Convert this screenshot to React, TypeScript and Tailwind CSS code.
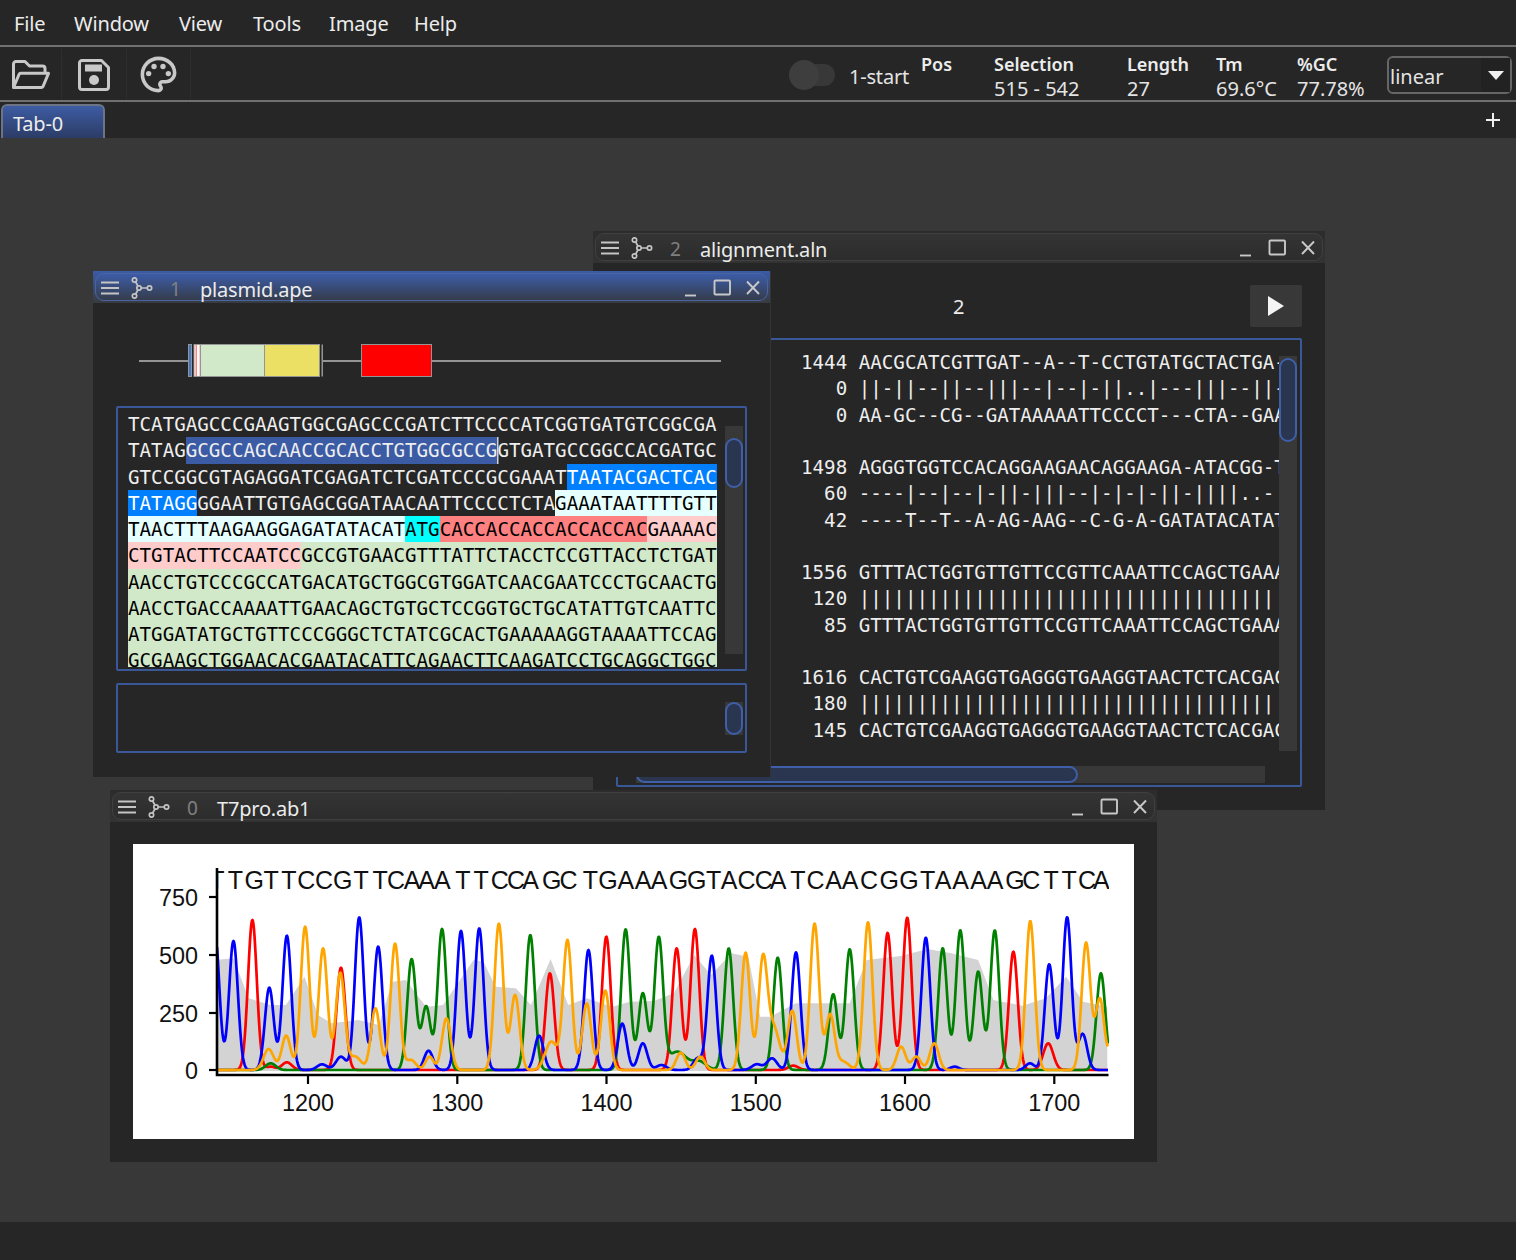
import React from "react";
import { MdOutlinePalette } from "react-icons/md";

const X7 = (z: number) => 105 + z / 2.958;
const X8 = (z: number) => 630 + z / 2.958;
const BASE = 1070;
type Peak = [number, number, number?];
const P = (X: (z: number) => number, z: number, zy: number, s?: number): Peak => [X(z), (855 - zy) / 3, s];

const blue: Peak[] = [
  P(X7, 325, 441), P(X7, 380, 468), P(X7, 486, 608), P(X7, 538, 452), P(X7, 642, 838, 5), P(X7, 698, 815, 5), P(X7, 752, 397), P(X7, 808, 485),
  P(X7, 957, 797), P(X7, 1053, 438), P(X7, 1107, 430), P(X7, 1284, 752), P(X7, 1430, 495), P(X7, 1530, 716),
  P(X8, 38, 775), P(X8, 93, 840, 5), P(X8, 200, 820), P(X8, 242, 512), P(X8, 375, 838, 5), P(X8, 420, 820, 5), P(X8, 491, 502), P(X8, 875, 458), P(X8, 960, 845), P(X8, 1183, 835), P(X8, 1240, 538), P(X8, 1293, 397), P(X8, 1339, 747),
];
const red: Peak[] = [
  P(X7, 436, 405), P(X7, 538, 832, 5), P(X7, 490, 845), P(X7, 698, 548), P(X7, 1316, 565), P(X7, 1483, 455),
  P(X8, 138, 490), P(X8, 192, 432), P(X8, 483, 842, 5), P(X8, 762, 444), P(X8, 820, 398), P(X8, 1134, 500), P(X8, 1237, 775, 5),
];
const green: Peak[] = [
  P(X7, 490, 835, 5), P(X7, 907, 523), P(X7, 950, 665), P(X7, 997, 432), P(X7, 1258, 450), P(X7, 1540, 433),
  P(X8, 38, 625), P(X8, 85, 462), P(X8, 140, 800, 9), P(X8, 205, 830, 7), P(X8, 292, 490), P(X8, 437, 518), P(X8, 601, 628), P(X8, 650, 493), P(X8, 925, 490), P(X8, 977, 436), P(X8, 1030, 560), P(X8, 1079, 436), P(X8, 1393, 565),
];
const orange: Peak[] = [
  P(X7, 484, 792, 5), P(X7, 536, 752), P(X7, 592, 425), P(X7, 645, 490), P(X7, 696, 565), P(X7, 740, 815, 6), P(X7, 800, 670), P(X7, 858, 476), P(X7, 905, 825, 5), P(X7, 960, 815, 4), P(X7, 1010, 700), P(X7, 1165, 416), P(X7, 1213, 630), P(X7, 1320, 770, 6), P(X7, 1368, 467), P(X7, 1425, 655), P(X7, 1480, 617),
  P(X8, 150, 803), P(X8, 208, 815), P(X8, 342, 503), P(X8, 393, 533), P(X8, 425, 730, 6), P(X8, 480, 678), P(X8, 546, 416), P(X8, 592, 690), P(X8, 630, 830, 6), P(X8, 704, 412), P(X8, 802, 785), P(X8, 847, 815), P(X8, 900, 775), P(X8, 1184, 408), P(X8, 1349, 474), P(X8, 1390, 642), P(X8, 1440, 620),
];

function trace(peaks: Peak[]) {
  const pts: string[] = [];
  for (let x = 217; x <= 1108; x += 0.5) {
    let h = 0;
    for (const [c, a, s] of peaks) {
      const sg = s ?? 4.4;
      h += a * Math.exp(-((x - c) ** 2) / (2 * sg * sg));
    }
    pts.push(`${(x - 133).toFixed(1)},${(BASE - h - 844).toFixed(1)}`);
  }
  return pts.join(" ");
}

const gray7 = [[330, 525], [380, 520], [395, 560], [425, 640], [490, 660], [535, 660], [590, 575], [630, 690], [670, 715], [750, 705], [810, 720], [850, 590], [890, 585], [930, 640], [950, 665], [1000, 660], [1090, 525], [1120, 530], [1155, 605], [1215, 610], [1260, 660], [1318, 522], [1370, 660], [1425, 640], [1500, 665]];
const gray8 = [[0, 650], [70, 648], [130, 625], [190, 510], [240, 570], [300, 505], [350, 515], [385, 695], [415, 695], [490, 655], [650, 655], [700, 525], [800, 513], [880, 492], [950, 505], [1030, 525], [1075, 645], [1160, 662], [1230, 640], [1290, 575], [1340, 650], [1412, 665]];
const grayPts = [
  `84,${BASE - 844 + 1}`,
  ...gray7.map(([z, y]) => `${(X7(z) - 133).toFixed(1)},${(785 + y / 3 - 844).toFixed(1)}`),
  ...gray8.map(([z, y]) => `${(X8(z) - 133).toFixed(1)},${(785 + y / 3 - 844).toFixed(1)}`),
  `${(X8(1412) - 133).toFixed(1)},${BASE - 844 + 1}`,
].join(" ");

const letters: [string, number][] = [
  ...("T T G T T C C G T T C A A A T T C C A G C T G A".split(" ").map((b, i) => [b, X7([325, 380, 436, 486, 538, 592, 645, 698, 752, 808, 858, 907, 950, 997, 1053, 1107, 1165, 1213, 1258, 1316, 1368, 1430, 1483, 1540][i])] as [string, number])),
  ...("A A G G T A C C A T C A A C G G T A A A A G C T T C A".split(" ").map((b, i) => [b, X8([38, 85, 138, 192, 242, 292, 342, 393, 437, 491, 546, 601, 650, 704, 762, 820, 875, 925, 977, 1030, 1079, 1134, 1184, 1240, 1293, 1349, 1393][i])] as [string, number])),
];

function Chromatogram() {
  const xt = [[1200, 308], [1300, 457.3], [1400, 606.5], [1500, 755.8], [1600, 905], [1700, 1054.3]];
  const yt = [[750, 897], [500, 955], [250, 1013], [0, 1070]];
  return (
    <svg width="1001" height="295" className="block" fontFamily="'Liberation Sans', Arial, sans-serif">
      <defs>
        <clipPath id="plot"><rect x="85" y="20" width="891" height="212" /></clipPath>
      </defs>
      <polygon points={grayPts} fill="#d3d3d3" clipPath="url(#plot)" />
      <g fill="none" strokeWidth="2.7" clipPath="url(#plot)" strokeLinejoin="round">
        <polyline points={trace(red)} stroke="#ff0000" />
        <polyline points={trace(green)} stroke="#008000" />
        <polyline points={trace(blue)} stroke="#0000ff" />
        <polyline points={trace(orange)} stroke="#ffa500" />
      </g>
      <g clipPath="url(#plot)" fontSize="25" fill="#111">
        {letters.map(([b, x], i) => <text key={i} x={x - 133 - (b === "T" ? 5.7 : 8)} y={44.5}>{b}</text>)}
      </g>
      <path d="M84 24V231H975.5" fill="none" stroke="#000" strokeWidth="2.6" />
      {yt.map(([v, y]) => (
        <g key={v}>
          <line x1="76" x2="84" y1={y - 844} y2={y - 844} stroke="#000" strokeWidth="2.2" />
          <text x="65" y={y - 844 + 8.5} fontSize="23.4" textAnchor="end" fill="#111">{v}</text>
        </g>
      ))}
      {xt.map(([v, x]) => (
        <g key={v}>
          <line x1={x - 133} x2={x - 133} y1="231" y2="240" stroke="#000" strokeWidth="2.2" />
          <text x={x - 133} y="266.5" fontSize="23.4" textAnchor="middle" fill="#111">{v}</text>
        </g>
      ))}
    </svg>
  );
}

function TreeIcon() {
  return (
    <svg width="22" height="22" viewBox="0 0 22 22" fill="none" stroke="#c4c4c4" strokeWidth="1.7" className="shrink-0">
      <circle cx="3.5" cy="3" r="2.2" /><circle cx="3.5" cy="19" r="2.2" /><circle cx="8" cy="11" r="2.2" /><circle cx="18.5" cy="11" r="2.2" />
      <path d="M4.6 5 L7 9 M4.6 17 L7 13 M10.2 11 H16.3" />
    </svg>
  );
}

function MenuIcon() {
  return (
    <svg width="18" height="14" viewBox="0 0 18 14" stroke="#c4c4c4" strokeWidth="2" className="shrink-0">
      <path d="M0 1.5H18M0 7H18M0 12.5H18" />
    </svg>
  );
}

function TitleBar({ active, index, title }: { active?: boolean; index: string; title: string }) {
  return (
    <div className={active ? "h-[32px] shrink-0 bg-gradient-to-b from-[#3a5ba8] to-[#383a40] px-[2px] pt-[2px] pb-[2px]" : "h-[32px] shrink-0 bg-gradient-to-b from-[#2c2c2c] to-[#333333] px-[2px] pt-[2px] pb-[2px]"}>
      <div className={active ? "flex h-full items-center rounded-[9px] border border-[#4a64a0] bg-gradient-to-b from-[#3c5ca8] to-[#353c4c] pl-[5px] pr-[7px] pt-[2px]" : "flex h-full items-center rounded-[9px] border border-[#404040] bg-gradient-to-b from-[#343434] to-[#2c2c2c] pl-[5px] pr-[7px] pt-[2px]"}>
        <MenuIcon />
        <div className="ml-[12px]"><TreeIcon /></div>
        <span className="ml-[17px] w-[30px] pt-[3px] text-[19px] leading-none text-[#808080]">{index}</span>
        <span className="pt-[3px] text-[20px] leading-none tracking-[-0.2px] text-[#ececec]">{title}</span>
        <svg width="75" height="18" viewBox="0 0 75 18" fill="none" stroke="#c8c8c8" strokeWidth="1.9" className="ml-auto shrink-0">
          <path d="M0 16.5H11" />
          <rect x="29.5" y="1.5" width="15.5" height="14" rx="1" />
          <path d="M62 2.5 L74 15 M74 2.5 L62 15" />
        </svg>
      </div>
    </div>
  );
}

function Win({ className, active, index, title, children }: { className: string; active?: boolean; index: string; title: string; children: React.ReactNode }) {
  return (
    <div className={"absolute flex flex-col bg-[#262626] " + className}>
      <TitleBar active={active} index={index} title={title} />
      {children}
    </div>
  );
}

const MONO = "font-['DejaVu_Sans_Mono',monospace] text-[19.18px] whitespace-pre";

function Seq({ children }: { children: React.ReactNode }) {
  return <div className="flex h-[26.25px] items-stretch leading-[28px]">{children}</div>;
}
const W = ({ t }: { t: string }) => <span className="text-[#eeeeee]">{t}</span>;
const Sp = ({ t, c }: { t: string; c: string }) => <span className={c}>{t}</span>;
const GREEN = "bg-[#d1e8c9] text-black";

function SeqView() {
  return (
    <div className={MONO + " h-[256px] w-[590px] overflow-hidden"}>
      <Seq><W t="TCATGAGCCCGAAGTGGCGAGCCCGATCTTCCCCATCGGTGATGTCGGCGA" /></Seq>
      <Seq><W t="TATAG" /><Sp t="GCGCCAGCAACCGCACCTGTGGCGCCG" c="bg-[#3b5ba5] text-[#eeeeee] shadow-[1.5px_0_0_#d0d0d0]" /><W t="GTGATGCCGGCCACGATGC" /></Seq>
      <Seq><W t="GTCCGGCGTAGAGGATCGAGATCTCGATCCCGCGAAAT" /><Sp t="TAATACGACTCAC" c="bg-[#0080ff] text-white" /></Seq>
      <Seq><Sp t="TATAGG" c="bg-[#0080ff] text-white" /><W t="GGAATTGTGAGCGGATAACAATTCCCCTCTA" /><Sp t="GAAATAATTTTGTT" c="bg-[#e6ffff] text-black" /></Seq>
      <Seq><Sp t="TAACTTTAAGAAGGAGATATACAT" c="bg-[#e6ffff] text-black" /><Sp t="ATG" c="bg-[#00ffff] text-black" /><Sp t="CACCACCACCACCACCAC" c="bg-[#ff8080] text-black" /><Sp t="GAAAAC" c="bg-[#ffcccc] text-black" /></Seq>
      <Seq><Sp t="CTGTACTTCCAATCC" c="bg-[#ffcccc] text-black" /><Sp t="GCCGTGAACGTTTATTCTACCTCCGTTACCTCTGAT" c={GREEN} /></Seq>
      <Seq><Sp t="AACCTGTCCCGCCATGACATGCTGGCGTGGATCAACGAATCCCTGCAACTG" c={GREEN} /></Seq>
      <Seq><Sp t="AACCTGACCAAAATTGAACAGCTGTGCTCCGGTGCTGCATATTGTCAATTC" c={GREEN} /></Seq>
      <Seq><Sp t="ATGGATATGCTGTTCCCGGGCTCTATCGCACTGAAAAAGGTAAAATTCCAG" c={GREEN} /></Seq>
      <Seq><Sp t="GCGAAGCTGGAACACGAATACATTCAGAACTTCAAGATCCTGCAGGCTGGC" c={GREEN} /></Seq>
    </div>
  );
}

const ALN = `1444 AACGCATCGTTGAT--A--T-CCTGTATGCTACTGA-TT
   0 ||-||--||--|||--|--|-||..|---|||--||-||
   0 AA-GC--CG--GATAAAAATTCCCCT---CTA--GAA-AA

1498 AGGGTGGTCCACAGGAAGAACAGGAAGA-ATACGG-TTAC
  60 ----|--|--|-||-|||--|-|-|-||-||||..-
  42 ----T--T--A-AG-AAG--C-G-A-GATATACATATGCA

1556 GTTTACTGGTGTTGTTCCGTTCAAATTCCAGCTGAAAGGT
 120 ||||||||||||||||||||||||||||||||||||
  85 GTTTACTGGTGTTGTTCCGTTCAAATTCCAGCTGAAAGGT

1616 CACTGTCGAAGGTGAGGGTGAAGGTAACTCTCACGACGGT
 180 ||||||||||||||||||||||||||||||||||||
 145 CACTGTCGAAGGTGAGGGTGAAGGTAACTCTCACGACGGT`;

function PlasmidMap() {
  return (
    <svg width="582" height="33" className="ml-[46px] block" fill="none">
      <path d="M0 17H49M184 17H222M293 17H582" stroke="#949494" strokeWidth="2" />
      <rect x="49.5" y="0.5" width="3" height="32" fill="#3b78c8" stroke="#949494" />
      <rect x="55" y="0.5" width="6" height="32" fill="#ffffff" stroke="#949494" />
      <rect x="56.5" y="1" width="1.5" height="31" fill="#ff8080" />
      <rect x="60" y="1" width="1.5" height="31" fill="#ffcccc" />
      <rect x="61.5" y="0.5" width="64" height="32" fill="#d1e8c9" stroke="#949494" />
      <rect x="125.5" y="0.5" width="55" height="32" fill="#ebdf64" stroke="#949494" />
      <rect x="182.5" y="0.5" width="1.5" height="32" fill="#949494" />
      <rect x="222.5" y="0.5" width="70" height="32" fill="#ff0000" stroke="#949494" />
    </svg>
  );
}

function Thumb({ className }: { className: string }) {
  return <div className={"rounded-full border-2 border-[#3f5fa8] bg-[#2a3550] " + className} />;
}

function Stat({ label, value, className }: { label: string; value: string; className: string }) {
  return (
    <div className={"flex h-[50px] shrink-0 flex-col pt-[2px] " + className}>
      <span className="text-[18px] leading-[24px] font-semibold text-[#ececec]">{label}</span>
      <span className="text-[20px] leading-[25px] text-[#e4e4e4]">{value}</span>
    </div>
  );
}

export default function App() {
  return (
    <div className="flex h-[1260px] w-[1516px] flex-col overflow-hidden bg-[#383838] font-['Noto_Sans','Open_Sans',sans-serif] text-[#ececec]">
      {/* menu */}
      <div className="flex h-[45px] shrink-0 items-center bg-[#262626] pl-[14px] pt-[2px] text-[20px] tracking-[-0.15px]">
        <span className="w-[60px]">File</span>
        <span className="w-[105px]">Window</span>
        <span className="w-[74px]">View</span>
        <span className="w-[76px]">Tools</span>
        <span className="w-[85px]">Image</span>
        <span>Help</span>
      </div>
      <div className="h-[2px] shrink-0 bg-[#707070]" />
      {/* toolbar */}
      <div className="flex h-[53px] shrink-0 items-center bg-[#262626] pr-[4px] pt-[2px]">
        <div className="flex h-full w-[62px] items-center justify-center border-r border-[#2e2e2e]">
          <svg width="40" height="32" viewBox="0 0 40 32" fill="none" stroke="#c8c8c8" strokeWidth="3" strokeLinejoin="round">
            <path d="M2.5 28V5a2.5 2.5 0 0 1 2.5-2.5h9l4.5 4.5h13a2.5 2.5 0 0 1 2.5 2.5v4" />
            <path d="M2.5 28.5l5.5-13a2 2 0 0 1 2-1.2h27.5l-5.5 13.2a2 2 0 0 1-2 1H2.5z" />
          </svg>
        </div>
        <div className="flex h-full w-[65px] items-center justify-center border-r border-[#2e2e2e]">
          <svg width="34" height="34" viewBox="0 0 34 34" fill="none">
            <path d="M5 2.5H24.5L31.5 9.5V29a2.5 2.5 0 0 1-2.5 2.5H5A2.5 2.5 0 0 1 2.5 29V5A2.5 2.5 0 0 1 5 2.5z" stroke="#c8c8c8" strokeWidth="3" strokeLinejoin="round" />
            <rect x="8" y="6.5" width="17" height="7" fill="#c8c8c8" />
            <circle cx="17" cy="22" r="5" fill="#c8c8c8" />
          </svg>
        </div>
        <div className="flex h-full w-[64px] items-center justify-center border-r border-[#2e2e2e]">
          <MdOutlinePalette size={43} color="#c8c8c8" />
        </div>
        {/* toggle */}
        <div className="ml-auto flex h-[30px] w-[46px] shrink-0 items-center">
          <div className="relative h-[22px] w-[46px] rounded-full bg-[#383838]">
            <div className="absolute left-0 top-[-4px] h-[30px] w-[30px] rounded-full bg-[#3e3e3e]" />
          </div>
        </div>
        <span className="ml-[14px] w-[72px] shrink-0 pt-[4px] text-[20px] tracking-[-0.2px] text-[#e4e4e4]">1-start</span>
        <Stat label="Pos" value="" className="w-[73px]" />
        <Stat label="Selection" value="515 - 542" className="w-[133px]" />
        <Stat label="Length" value="27" className="w-[89px]" />
        <Stat label="Tm" value="69.6°C" className="w-[81px]" />
        <Stat label="%GC" value="77.78%" className="w-[90px]" />
        <div className="flex h-[38px] w-[125px] shrink-0 items-center rounded-[6px] border-2 border-[#666666] pl-[1px] text-[20px] text-[#e4e4e4]">
          <span className="flex-1 pt-[4px]">linear</span>
          <div className="flex h-[34px] w-[29px] items-center justify-center bg-[#222222]">
            <svg width="16" height="9" viewBox="0 0 16 9" className="mt-[2px]"><path d="M0 0H16L8 9z" fill="#f0f0f0" /></svg>
          </div>
        </div>
      </div>
      <div className="h-[2px] shrink-0 bg-[#707070]" />
      {/* tabs */}
      <div className="flex h-[36px] shrink-0 items-end justify-between bg-[#262626] pl-[1px] pr-[15px]">
        <div className="flex h-[34px] w-[104px] items-center rounded-t-[6px] border-x-2 border-t-2 border-[#6c7486] bg-gradient-to-b from-[#3d5ca3] to-[#2c3c66] pl-[10px] pt-[3px] text-[20px] tracking-[-0.2px]">Tab-0</div>
        <svg width="16" height="16" viewBox="0 0 16 16" className="mb-[10px]"><path d="M8 1V15M1 8H15" stroke="#f0f0f0" strokeWidth="2" /></svg>
      </div>
      {/* desktop */}
      <div className="relative flex-1">
        <Win className="left-[593px] top-[93px] h-[579px] w-[732px]" index="2" title="alignment.aln">
          <div className="flex items-center pl-[23px] pr-[23px] pt-[22px]">
            <span className="ml-[337px] pt-[2px] text-[20px]">2</span>
            <div className="ml-auto flex h-[42px] w-[52px] items-center justify-center rounded-[2px] bg-[#383838]">
              <svg width="18" height="20" viewBox="0 0 18 20"><path d="M1 0L17 10L1 20z" fill="#f4f4f4" /></svg>
            </div>
          </div>
          <div className="ml-[23px] mt-[11px] h-[449px] w-[686px] rounded-[2px] border-2 border-[#3a5899]">
            <div className="flex h-[413px]">
              <pre className={MONO + " ml-[183px] mt-[10px] h-[398px] w-[478px] overflow-hidden leading-[26.25px] text-[#eeeeee]"}>{ALN}</pre>
              <div className="mt-[16px] h-[395px] w-[18px] bg-[#383838]">
                <Thumb className="mt-[2px] h-[84px] w-[18px]" />
              </div>
            </div>
            <div className="ml-[18px] mt-[13px] h-[17px] w-[629px] bg-[#383838]">
              <Thumb className="h-[17px] w-[442px]" />
            </div>
          </div>
        </Win>

        <Win active className="left-[93px] top-[133px] h-[506px] w-[678px] border-r border-[#333333]" index="1" title="plasmid.ape">
          <div className="pt-[41px]"><PlasmidMap /></div>
          <div className="ml-[23px] mt-[29px] flex h-[265px] w-[631px] rounded-[2px] border-2 border-[#3a5899] pl-[10px] pt-[3px]">
            <SeqView />
            <div className="ml-[7px] mt-[15px] h-[228px] w-[18px] bg-[#383838]">
              <Thumb className="mt-[12px] h-[50px] w-[18px]" />
            </div>
          </div>
          <div className="ml-[23px] mt-[12px] flex h-[70px] w-[631px] justify-end rounded-[2px] border-2 border-[#3a5899] pr-[2px] pt-[17px]">
            <div className="h-[33px] w-[18px] bg-[#383838]">
              <Thumb className="h-[33px] w-[18px]" />
            </div>
          </div>
        </Win>

        <Win className="left-[110px] top-[652px] h-[372px] w-[1047px]" index="0" title="T7pro.ab1">
          <div className="ml-[23px] mt-[22px] h-[295px] w-[1001px] bg-white"><Chromatogram /></div>
        </Win>
      </div>
      <div className="h-[38px] shrink-0 bg-[#262626]" />
    </div>
  );
}
